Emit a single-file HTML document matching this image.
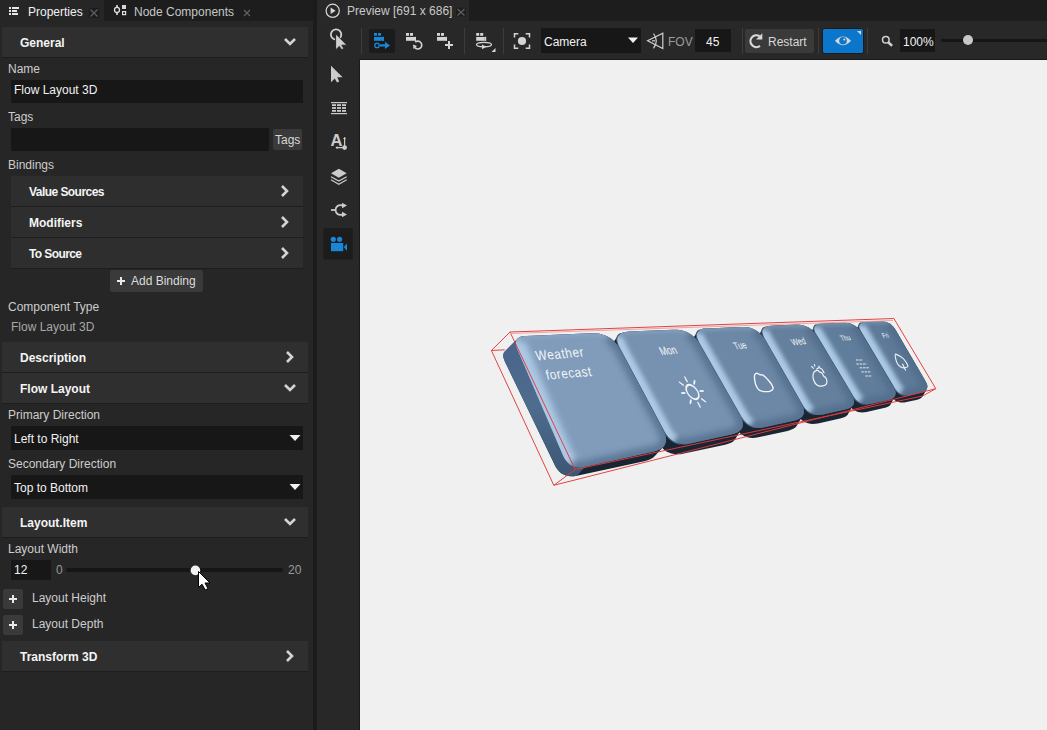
<!DOCTYPE html>
<html><head><meta charset="utf-8">
<style>
*{margin:0;padding:0;box-sizing:border-box}
html,body{width:1047px;height:730px;overflow:hidden;background:#262626}
body{position:relative;font-family:"Liberation Sans",sans-serif;font-size:12px;color:#cfcfcf}
.a{position:absolute}
.t{position:absolute;white-space:nowrap;line-height:14px;height:14px}
.b{font-weight:bold;color:#f4f4f4}
.hdr{position:absolute;left:2px;width:306px;height:31px;background:#2f2f2f;border-bottom:1px solid #1e1e1e}
.row{position:absolute;left:11px;width:292px;height:31px;background:#2e2e2e;border-bottom:1px solid #1e1e1e}
.inp{position:absolute;background:#171717}
.btn{position:absolute;background:#3a3a3a;border-radius:2px}
.lbl{color:#cdcdcd}
.val{color:#f2f2f2}
</style></head><body>
<!-- left panel -->
<div class="a" style="left:0;top:0;width:313px;height:21px;background:#1d1d1d"></div>
<div class="a" style="left:0;top:0;width:104px;height:21px;background:#262626"></div>
<div class="a" style="left:313px;top:0;width:4px;height:730px;background:#1b1b1b"></div>

<div class="t val" style="left:28px;top:5px">Properties</div>
<div class="t" style="left:134px;top:5px;color:#c6c6c6">Node Components</div>

<div class="hdr" style="top:27px"></div>
<div class="t b" style="left:20px;top:36px">General</div>
<div class="t lbl" style="left:8px;top:62px">Name</div>
<div class="inp" style="left:11px;top:80px;width:292px;height:23px"></div>
<div class="t val" style="left:14px;top:83px">Flow Layout 3D</div>
<div class="t lbl" style="left:8px;top:110px">Tags</div>
<div class="inp" style="left:11px;top:128px;width:258px;height:23px"></div>
<div class="btn" style="left:273px;top:129px;width:29px;height:21px"></div>
<div class="t" style="left:275px;top:133px;color:#d8d8d8">Tags</div>
<div class="t lbl" style="left:8px;top:158px">Bindings</div>
<div class="row" style="top:176px"></div>
<div class="row" style="top:207px"></div>
<div class="row" style="top:238px"></div>
<div class="t b" style="left:29px;top:185px;letter-spacing:-0.55px">Value Sources</div>
<div class="t b" style="left:29px;top:216px">Modifiers</div>
<div class="t b" style="left:29px;top:247px;letter-spacing:-0.6px">To Source</div>
<div class="btn" style="left:110px;top:270px;width:93px;height:22px"></div>
<div class="t" style="left:131px;top:274px;color:#dcdcdc">Add Binding</div>
<div class="t lbl" style="left:8px;top:300px">Component Type</div>
<div class="t" style="left:11px;top:320px;color:#a8a8a8">Flow Layout 3D</div>

<div class="hdr" style="top:342px"></div>
<div class="t b" style="left:20px;top:351px">Description</div>
<div class="hdr" style="top:373px"></div>
<div class="t b" style="left:20px;top:382px">Flow Layout</div>
<div class="t lbl" style="left:8px;top:408px">Primary Direction</div>
<div class="inp" style="left:11px;top:426px;width:292px;height:24px"></div>
<div class="t val" style="left:14px;top:432px">Left to Right</div>
<div class="t lbl" style="left:8px;top:457px">Secondary Direction</div>
<div class="inp" style="left:11px;top:475px;width:292px;height:24px"></div>
<div class="t val" style="left:14px;top:481px">Top to Bottom</div>

<div class="hdr" style="top:507px"></div>
<div class="t b" style="left:20px;top:516px">Layout.Item</div>
<div class="t lbl" style="left:8px;top:542px">Layout Width</div>
<div class="inp" style="left:11px;top:560px;width:40px;height:20px"></div>
<div class="t val" style="left:14px;top:563px">12</div>
<div class="t" style="left:56px;top:563px;color:#9a9a9a">0</div>
<div class="a" style="left:66px;top:568px;width:217px;height:4px;border-radius:2px;background:#161616"></div>
<div class="t" style="left:288px;top:563px;color:#9a9a9a">20</div>
<div class="btn" style="left:3px;top:589px;width:20px;height:20px"></div>
<div class="t lbl" style="left:32px;top:591px">Layout Height</div>
<div class="btn" style="left:3px;top:615px;width:20px;height:20px"></div>
<div class="t lbl" style="left:32px;top:617px">Layout Depth</div>
<div class="hdr" style="top:641px"></div>
<div class="t b" style="left:20px;top:650px">Transform 3D</div>

<!-- right side -->
<div class="a" style="left:317px;top:0;width:730px;height:21px;background:#1d1d1d"></div>
<div class="a" style="left:317px;top:0;width:152px;height:21px;background:#282828"></div>
<div class="a" style="left:317px;top:21px;width:730px;height:39px;background:#282828"></div>
<div class="a" style="left:317px;top:60px;width:43px;height:670px;background:#282828"></div>
<div class="a" style="left:359px;top:59px;width:688px;height:671px;background:#1a1a1a"></div>
<div class="a" style="left:360px;top:60px;width:687px;height:670px;background:#f0f0f0"></div>
<!--OBJ--><svg class="a" style="left:0;top:0" width="1047" height="730" viewBox="0 0 1047 730">
<defs>
<filter id="bl" x="-20%" y="-20%" width="140%" height="140%"><feGaussianBlur stdDeviation="2.2"/></filter>
<filter id="bl2" x="-20%" y="-20%" width="140%" height="140%"><feGaussianBlur stdDeviation="1.2"/></filter>
<filter id="bl3" x="-30%" y="-30%" width="160%" height="160%"><feGaussianBlur stdDeviation="3"/></filter>
<linearGradient id="side" x1="0" y1="0" x2="0" y2="1"><stop offset="0" stop-color="#48658a"/><stop offset="0.5" stop-color="#4e6c8d"/><stop offset="1" stop-color="#3d5674"/></linearGradient>
<clipPath id="c0"><path d="M517.5 349.4 L516.6 346.9 L516.1 344.7 L516.0 342.7 L516.2 341.0 L516.9 339.6 L517.9 338.3 L519.4 337.4 L521.2 336.6 L523.4 336.2 L526.0 335.9 L591.0 333.2 L594.9 333.2 L598.6 333.6 L602.0 334.4 L605.3 335.5 L608.3 337.0 L611.2 338.8 L613.8 341.1 L616.2 343.7 L618.4 346.7 L620.4 350.0 L663.0 429.8 L664.6 433.2 L665.6 436.3 L666.1 439.2 L665.9 441.8 L665.2 444.1 L663.9 446.2 L662.0 448.0 L659.6 449.5 L656.5 450.8 L652.9 451.7 L585.1 466.7 L582.0 467.2 L579.2 467.3 L576.5 467.1 L574.1 466.5 L571.8 465.6 L569.7 464.3 L567.8 462.6 L566.0 460.6 L564.5 458.2 L563.1 455.4Z"/></clipPath>
<clipPath id="c1"><path d="M619.5 348.2 L618.0 345.2 L617.1 342.5 L616.8 340.1 L616.9 338.0 L617.6 336.1 L618.8 334.6 L620.6 333.4 L622.8 332.5 L625.6 331.9 L629.0 331.6 L673.0 329.8 L676.5 329.8 L679.8 330.1 L683.0 330.8 L685.9 331.8 L688.7 333.1 L691.3 334.8 L693.7 336.8 L696.0 339.1 L698.0 341.7 L699.9 344.7 L739.9 415.0 L741.4 418.0 L742.4 420.8 L742.9 423.3 L742.8 425.6 L742.2 427.7 L741.1 429.5 L739.4 431.1 L737.2 432.5 L734.5 433.6 L731.2 434.5 L690.0 443.6 L686.6 444.2 L683.4 444.3 L680.3 444.1 L677.4 443.5 L674.7 442.5 L672.2 441.1 L669.9 439.3 L667.7 437.1 L665.8 434.6 L664.0 431.6Z"/></clipPath>
<clipPath id="c2"><path d="M698.9 342.9 L697.6 340.3 L696.7 337.9 L696.3 335.8 L696.4 333.9 L697.0 332.3 L698.0 331.0 L699.5 329.9 L701.5 329.1 L704.0 328.6 L707.0 328.4 L741.2 326.9 L744.3 326.9 L747.3 327.2 L750.1 327.8 L752.7 328.7 L755.2 329.9 L757.5 331.4 L759.6 333.1 L761.6 335.2 L763.5 337.5 L765.1 340.1 L801.3 403.5 L802.6 406.1 L803.5 408.6 L803.9 410.9 L803.9 412.9 L803.3 414.7 L802.3 416.4 L800.8 417.8 L798.9 419.0 L796.5 420.0 L793.6 420.8 L764.4 427.2 L761.4 427.7 L758.5 427.9 L755.8 427.7 L753.2 427.2 L750.7 426.3 L748.5 425.1 L746.3 423.5 L744.4 421.6 L742.6 419.4 L740.9 416.7Z"/></clipPath>
<clipPath id="c3"><path d="M764.1 338.4 L763.0 336.1 L762.2 334.0 L761.9 332.2 L761.9 330.5 L762.4 329.1 L763.3 328.0 L764.7 327.1 L766.4 326.4 L768.6 325.9 L771.2 325.7 L795.7 324.6 L798.4 324.7 L801.0 324.9 L803.4 325.4 L805.8 326.2 L807.9 327.2 L810.0 328.5 L811.9 330.0 L813.7 331.8 L815.3 333.8 L816.8 336.1 L851.7 394.4 L852.9 396.7 L853.7 398.9 L854.1 400.8 L854.1 402.6 L853.6 404.2 L852.8 405.6 L851.5 406.8 L849.8 407.9 L847.7 408.8 L845.2 409.5 L822.9 414.4 L820.2 414.8 L817.7 414.9 L815.3 414.8 L813.0 414.3 L810.9 413.6 L808.9 412.5 L807.0 411.1 L805.3 409.5 L803.7 407.5 L802.3 405.2Z"/></clipPath>
<clipPath id="c4"><path d="M815.8 334.4 L814.7 332.4 L814.1 330.6 L813.7 329.1 L813.8 327.7 L814.2 326.5 L814.9 325.5 L816.1 324.7 L817.6 324.2 L819.4 323.8 L821.6 323.6 L843.0 322.7 L845.3 322.7 L847.6 322.9 L849.7 323.3 L851.7 324.0 L853.5 324.9 L855.3 326.0 L856.9 327.3 L858.4 328.8 L859.8 330.5 L861.1 332.5 L893.6 387.1 L894.6 389.1 L895.3 391.0 L895.7 392.6 L895.6 394.1 L895.2 395.5 L894.5 396.7 L893.4 397.8 L892.0 398.7 L890.2 399.4 L888.0 400.0 L870.5 403.9 L868.3 404.3 L866.1 404.4 L864.0 404.3 L862.1 403.9 L860.2 403.2 L858.5 402.3 L856.9 401.2 L855.4 399.8 L854.0 398.1 L852.7 396.1Z"/></clipPath>
<clipPath id="c5"><path d="M860.6 331.6 L859.7 329.8 L859.0 328.2 L858.7 326.8 L858.8 325.5 L859.1 324.4 L859.8 323.5 L860.9 322.8 L862.2 322.2 L863.9 321.9 L866.0 321.7 L879.2 321.1 L881.4 321.2 L883.4 321.4 L885.3 321.8 L887.1 322.4 L888.8 323.2 L890.4 324.2 L891.9 325.4 L893.3 326.8 L894.6 328.4 L895.7 330.2 L925.4 381.1 L926.4 382.9 L927.0 384.6 L927.3 386.1 L927.2 387.5 L926.9 388.8 L926.2 389.9 L925.2 390.9 L923.9 391.7 L922.2 392.4 L920.2 392.9 L910.5 395.1 L908.4 395.4 L906.4 395.6 L904.5 395.4 L902.7 395.1 L901.0 394.5 L899.4 393.7 L897.9 392.6 L896.5 391.3 L895.3 389.8 L894.1 388.0Z"/></clipPath>
</defs>
<path d="M853.8 334.7 L853.8 333.4 L854.2 332.4 L859.1 324.4 L859.9 323.5 L860.9 322.8 L862.2 322.2 L864.0 321.9 L866.0 321.7 L879.2 321.1 L881.4 321.2 L883.4 321.4 L885.3 321.8 L887.1 322.4 L888.9 323.2 L890.5 324.2 L891.9 325.4 L893.3 326.8 L894.6 328.4 L895.8 330.2 L925.4 381.1 L926.4 382.9 L927.0 384.6 L927.3 386.1 L927.2 387.5 L926.9 388.8 L922.8 395.9 L922.1 397.0 L921.1 397.9 L919.8 398.8 L918.1 399.4 L916.2 400.0 L906.5 402.1 L904.4 402.4 L902.4 402.6 L900.5 402.4 L898.7 402.1 L897.0 401.5 L895.4 400.7 L893.9 399.6 L892.5 398.4 L891.2 396.8 L890.0 395.1 L855.8 339.5 L854.8 337.7 L854.1 336.1Z" fill="#1a2534"/>
<path d="M860.6 331.6 L859.7 329.8 L859.0 328.2 L858.7 326.8 L858.8 325.5 L859.1 324.4 L859.8 323.5 L860.9 322.8 L862.2 322.2 L863.9 321.9 L866.0 321.7 L879.2 321.1 L881.4 321.2 L883.4 321.4 L885.3 321.8 L887.1 322.4 L888.8 323.2 L890.4 324.2 L891.9 325.4 L893.3 326.8 L894.6 328.4 L895.7 330.2 L925.4 381.1 L926.4 382.9 L927.0 384.6 L927.3 386.1 L927.2 387.5 L926.9 388.8 L926.2 389.9 L925.2 390.9 L923.9 391.7 L922.2 392.4 L920.2 392.9 L910.5 395.1 L908.4 395.4 L906.4 395.6 L904.5 395.4 L902.7 395.1 L901.0 394.5 L899.4 393.7 L897.9 392.6 L896.5 391.3 L895.3 389.8 L894.1 388.0Z" fill="#5e7a98"/>
<g clip-path="url(#c5)">
<path d="M901.0 394.5 L899.4 393.7 L897.9 392.6 L896.5 391.3 L895.3 389.8 L894.1 388.0 L860.6 331.6 L859.7 329.8 L859.0 328.2 L858.7 326.8 L858.8 325.5 L859.1 324.4" fill="none" stroke="#abc8e4" stroke-width="15" filter="url(#bl)" opacity="1"/>
<path d="M859.1 324.4 L859.8 323.5 L860.9 322.8 L862.2 322.2 L863.9 321.9 L866.0 321.7 L879.2 321.1 L881.4 321.2 L883.4 321.4 L885.3 321.8 L887.1 322.4 L888.8 323.2" fill="none" stroke="#9ab6d2" stroke-width="4" filter="url(#bl)" opacity="0.45"/>
<path d="M888.8 323.2 L890.4 324.2 L891.9 325.4 L893.3 326.8 L894.6 328.4 L895.7 330.2 L925.4 381.1 L926.4 382.9 L927.0 384.6 L927.3 386.1 L927.2 387.5 L926.9 388.8 L926.2 389.9 L925.2 390.9 L923.9 391.7 L922.2 392.4 L920.2 392.9 L910.5 395.1 L908.4 395.4 L906.4 395.6 L904.5 395.4 L902.7 395.1 L901.0 394.5" fill="none" stroke="#4d6987" stroke-width="12" filter="url(#bl3)" opacity="0.7"/>
</g>
<path d="M904.5 395.4 L902.7 395.1 L901.0 394.5 L899.4 393.7 L897.9 392.6 L896.5 391.3 L895.3 389.8 L894.1 388.0 L860.6 331.6 L859.7 329.8 L859.0 328.2 L858.7 326.8 L858.8 325.5 L859.1 324.4 L859.8 323.5 L860.9 322.8" fill="none" stroke="#425b77" stroke-width="1.1"/>
<path d="M808.8 338.0 L808.8 336.6 L809.2 335.5 L814.2 326.5 L814.9 325.5 L816.1 324.7 L817.6 324.1 L819.4 323.8 L821.6 323.6 L843.0 322.7 L845.3 322.7 L847.6 322.9 L849.7 323.3 L851.6 324.0 L853.5 324.9 L855.3 325.9 L856.9 327.3 L858.4 328.8 L859.8 330.5 L861.1 332.5 L893.6 387.1 L894.6 389.1 L895.3 390.9 L895.6 392.6 L895.6 394.1 L895.2 395.5 L891.1 403.6 L890.4 404.8 L889.3 405.9 L887.9 406.8 L886.1 407.5 L883.9 408.1 L866.5 411.9 L864.3 412.3 L862.1 412.4 L860.0 412.3 L858.1 411.9 L856.2 411.2 L854.5 410.4 L852.8 409.2 L851.3 407.8 L849.9 406.2 L848.6 404.2 L810.9 343.2 L809.9 341.3 L809.1 339.5Z" fill="#1a2534"/>
<path d="M815.8 334.4 L814.7 332.4 L814.1 330.6 L813.7 329.1 L813.8 327.7 L814.2 326.5 L814.9 325.5 L816.1 324.7 L817.6 324.2 L819.4 323.8 L821.6 323.6 L843.0 322.7 L845.3 322.7 L847.6 322.9 L849.7 323.3 L851.7 324.0 L853.5 324.9 L855.3 326.0 L856.9 327.3 L858.4 328.8 L859.8 330.5 L861.1 332.5 L893.6 387.1 L894.6 389.1 L895.3 391.0 L895.7 392.6 L895.6 394.1 L895.2 395.5 L894.5 396.7 L893.4 397.8 L892.0 398.7 L890.2 399.4 L888.0 400.0 L870.5 403.9 L868.3 404.3 L866.1 404.4 L864.0 404.3 L862.1 403.9 L860.2 403.2 L858.5 402.3 L856.9 401.2 L855.4 399.8 L854.0 398.1 L852.7 396.1Z" fill="#607d9b"/>
<g clip-path="url(#c4)">
<path d="M860.2 403.2 L858.5 402.3 L856.9 401.2 L855.4 399.8 L854.0 398.1 L852.7 396.1 L815.8 334.4 L814.7 332.4 L814.1 330.6 L813.7 329.1 L813.8 327.7 L814.2 326.5" fill="none" stroke="#abc8e4" stroke-width="15" filter="url(#bl)" opacity="1"/>
<path d="M814.2 326.5 L814.9 325.5 L816.1 324.7 L817.6 324.2 L819.4 323.8 L821.6 323.6 L843.0 322.7 L845.3 322.7 L847.6 322.9 L849.7 323.3 L851.7 324.0 L853.5 324.9" fill="none" stroke="#9ab6d2" stroke-width="4" filter="url(#bl)" opacity="0.45"/>
<path d="M853.5 324.9 L855.3 326.0 L856.9 327.3 L858.4 328.8 L859.8 330.5 L861.1 332.5 L893.6 387.1 L894.6 389.1 L895.3 391.0 L895.7 392.6 L895.6 394.1 L895.2 395.5 L894.5 396.7 L893.4 397.8 L892.0 398.7 L890.2 399.4 L888.0 400.0 L870.5 403.9 L868.3 404.3 L866.1 404.4 L864.0 404.3 L862.1 403.9 L860.2 403.2" fill="none" stroke="#4d6987" stroke-width="12" filter="url(#bl3)" opacity="0.7"/>
</g>
<path d="M864.0 404.3 L862.1 403.9 L860.2 403.2 L858.5 402.3 L856.9 401.2 L855.4 399.8 L854.0 398.1 L852.7 396.1 L815.8 334.4 L814.7 332.4 L814.1 330.6 L813.7 329.1 L813.8 327.7 L814.2 326.5 L814.9 325.5 L816.1 324.7" fill="none" stroke="#425b77" stroke-width="1.1"/>
<path d="M755.9 342.1 L756.0 340.5 L756.5 339.1 L762.4 329.1 L763.3 328.0 L764.7 327.1 L766.4 326.4 L768.6 325.9 L771.2 325.7 L795.6 324.6 L798.4 324.6 L801.0 324.9 L803.4 325.4 L805.8 326.2 L807.9 327.2 L810.0 328.5 L811.9 330.0 L813.7 331.8 L815.3 333.8 L816.8 336.1 L851.6 394.4 L852.9 396.7 L853.7 398.9 L854.1 400.8 L854.1 402.6 L853.6 404.2 L848.5 413.3 L847.7 414.7 L846.4 415.9 L844.7 417.0 L842.6 417.8 L840.1 418.5 L817.9 423.4 L815.2 423.8 L812.7 423.9 L810.3 423.8 L808.0 423.3 L805.9 422.6 L803.9 421.5 L802.0 420.2 L800.2 418.5 L798.6 416.6 L797.2 414.3 L758.3 348.3 L757.1 346.0 L756.3 343.9Z" fill="#1a2534"/>
<path d="M764.1 338.4 L763.0 336.1 L762.2 334.0 L761.9 332.2 L761.9 330.5 L762.4 329.1 L763.3 328.0 L764.7 327.1 L766.4 326.4 L768.6 325.9 L771.2 325.7 L795.7 324.6 L798.4 324.7 L801.0 324.9 L803.4 325.4 L805.8 326.2 L807.9 327.2 L810.0 328.5 L811.9 330.0 L813.7 331.8 L815.3 333.8 L816.8 336.1 L851.7 394.4 L852.9 396.7 L853.7 398.9 L854.1 400.8 L854.1 402.6 L853.6 404.2 L852.8 405.6 L851.5 406.8 L849.8 407.9 L847.7 408.8 L845.2 409.5 L822.9 414.4 L820.2 414.8 L817.7 414.9 L815.3 414.8 L813.0 414.3 L810.9 413.6 L808.9 412.5 L807.0 411.1 L805.3 409.5 L803.7 407.5 L802.3 405.2Z" fill="#64809d"/>
<g clip-path="url(#c3)">
<path d="M810.9 413.6 L808.9 412.5 L807.0 411.1 L805.3 409.5 L803.7 407.5 L802.3 405.2 L764.1 338.4 L763.0 336.1 L762.2 334.0 L761.9 332.2 L761.9 330.5 L762.4 329.1" fill="none" stroke="#abc8e4" stroke-width="15" filter="url(#bl)" opacity="1"/>
<path d="M762.4 329.1 L763.3 328.0 L764.7 327.1 L766.4 326.4 L768.6 325.9 L771.2 325.7 L795.7 324.6 L798.4 324.7 L801.0 324.9 L803.4 325.4 L805.8 326.2 L807.9 327.2" fill="none" stroke="#9ab6d2" stroke-width="4" filter="url(#bl)" opacity="0.45"/>
<path d="M807.9 327.2 L810.0 328.5 L811.9 330.0 L813.7 331.8 L815.3 333.8 L816.8 336.1 L851.7 394.4 L852.9 396.7 L853.7 398.9 L854.1 400.8 L854.1 402.6 L853.6 404.2 L852.8 405.6 L851.5 406.8 L849.8 407.9 L847.7 408.8 L845.2 409.5 L822.9 414.4 L820.2 414.8 L817.7 414.9 L815.3 414.8 L813.0 414.3 L810.9 413.6" fill="none" stroke="#4d6987" stroke-width="12" filter="url(#bl3)" opacity="0.7"/>
</g>
<path d="M815.3 414.8 L813.0 414.3 L810.9 413.6 L808.9 412.5 L807.0 411.1 L805.3 409.5 L803.7 407.5 L802.3 405.2 L764.1 338.4 L763.0 336.1 L762.2 334.0 L761.9 332.2 L761.9 330.5 L762.4 329.1 L763.3 328.0 L764.7 327.1" fill="none" stroke="#425b77" stroke-width="1.1"/>
<path d="M689.4 346.7 L689.5 344.9 L690.0 343.3 L697.0 332.3 L698.0 331.0 L699.5 329.9 L701.5 329.1 L704.0 328.6 L707.0 328.4 L741.2 326.9 L744.3 326.9 L747.3 327.2 L750.1 327.8 L752.7 328.7 L755.2 329.9 L757.5 331.4 L759.6 333.1 L761.6 335.2 L763.5 337.5 L765.1 340.1 L801.3 403.5 L802.6 406.1 L803.5 408.6 L803.9 410.9 L803.9 412.9 L803.3 414.8 L797.2 424.9 L796.2 426.5 L794.7 427.9 L792.8 429.1 L790.4 430.1 L787.5 430.9 L758.4 437.2 L755.4 437.7 L752.5 437.9 L749.8 437.7 L747.2 437.2 L744.7 436.3 L742.4 435.1 L740.3 433.6 L738.3 431.7 L736.5 429.4 L734.8 426.9 L692.1 353.8 L690.7 351.1 L689.8 348.8Z" fill="#1a2534"/>
<path d="M698.9 342.9 L697.6 340.3 L696.7 337.9 L696.3 335.8 L696.4 333.9 L697.0 332.3 L698.0 331.0 L699.5 329.9 L701.5 329.1 L704.0 328.6 L707.0 328.4 L741.2 326.9 L744.3 326.9 L747.3 327.2 L750.1 327.8 L752.7 328.7 L755.2 329.9 L757.5 331.4 L759.6 333.1 L761.6 335.2 L763.5 337.5 L765.1 340.1 L801.3 403.5 L802.6 406.1 L803.5 408.6 L803.9 410.9 L803.9 412.9 L803.3 414.7 L802.3 416.4 L800.8 417.8 L798.9 419.0 L796.5 420.0 L793.6 420.8 L764.4 427.2 L761.4 427.7 L758.5 427.9 L755.8 427.7 L753.2 427.2 L750.7 426.3 L748.5 425.1 L746.3 423.5 L744.4 421.6 L742.6 419.4 L740.9 416.7Z" fill="#6c88a6"/>
<g clip-path="url(#c2)">
<path d="M750.7 426.3 L748.5 425.1 L746.3 423.5 L744.4 421.6 L742.6 419.4 L740.9 416.7 L698.9 342.9 L697.6 340.3 L696.7 337.9 L696.3 335.8 L696.4 333.9 L697.0 332.3" fill="none" stroke="#abc8e4" stroke-width="15" filter="url(#bl)" opacity="1"/>
<path d="M697.0 332.3 L698.0 331.0 L699.5 329.9 L701.5 329.1 L704.0 328.6 L707.0 328.4 L741.2 326.9 L744.3 326.9 L747.3 327.2 L750.1 327.8 L752.7 328.7 L755.2 329.9" fill="none" stroke="#9ab6d2" stroke-width="4" filter="url(#bl)" opacity="0.45"/>
<path d="M755.2 329.9 L757.5 331.4 L759.6 333.1 L761.6 335.2 L763.5 337.5 L765.1 340.1 L801.3 403.5 L802.6 406.1 L803.5 408.6 L803.9 410.9 L803.9 412.9 L803.3 414.7 L802.3 416.4 L800.8 417.8 L798.9 419.0 L796.5 420.0 L793.6 420.8 L764.4 427.2 L761.4 427.7 L758.5 427.9 L755.8 427.7 L753.2 427.2 L750.7 426.3" fill="none" stroke="#4d6987" stroke-width="12" filter="url(#bl3)" opacity="0.7"/>
</g>
<path d="M755.8 427.7 L753.2 427.2 L750.7 426.3 L748.5 425.1 L746.3 423.5 L744.4 421.6 L742.6 419.4 L740.9 416.7 L698.9 342.9 L697.6 340.3 L696.7 337.9 L696.3 335.8 L696.4 333.9 L697.0 332.3 L698.0 331.0 L699.5 329.9" fill="none" stroke="#425b77" stroke-width="1.1"/>
<path d="M608.9 351.9 L609.1 349.8 L609.7 348.0 L617.6 336.1 L618.8 334.6 L620.6 333.4 L622.8 332.5 L625.6 331.9 L629.0 331.6 L673.0 329.8 L676.5 329.8 L679.9 330.1 L683.0 330.8 L686.0 331.8 L688.7 333.1 L691.3 334.8 L693.7 336.8 L696.0 339.1 L698.0 341.7 L699.9 344.7 L739.9 415.0 L741.4 418.0 L742.4 420.8 L742.9 423.3 L742.8 425.6 L742.2 427.7 L734.8 439.8 L733.2 441.4 L731.0 442.7 L728.3 443.8 L725.1 444.7 L684.0 453.6 L680.6 454.2 L677.4 454.3 L674.3 454.1 L671.4 453.5 L668.7 452.6 L666.1 451.2 L663.8 449.4 L661.6 447.3 L659.6 444.7 L657.8 441.8 L611.8 359.9 L610.3 356.9 L609.4 354.3Z" fill="#1a2534"/>
<path d="M619.5 348.2 L618.0 345.2 L617.1 342.5 L616.8 340.1 L616.9 338.0 L617.6 336.1 L618.8 334.6 L620.6 333.4 L622.8 332.5 L625.6 331.9 L629.0 331.6 L673.0 329.8 L676.5 329.8 L679.8 330.1 L683.0 330.8 L685.9 331.8 L688.7 333.1 L691.3 334.8 L693.7 336.8 L696.0 339.1 L698.0 341.7 L699.9 344.7 L739.9 415.0 L741.4 418.0 L742.4 420.8 L742.9 423.3 L742.8 425.6 L742.2 427.7 L741.1 429.5 L739.4 431.1 L737.2 432.5 L734.5 433.6 L731.2 434.5 L690.0 443.6 L686.6 444.2 L683.4 444.3 L680.3 444.1 L677.4 443.5 L674.7 442.5 L672.2 441.1 L669.9 439.3 L667.7 437.1 L665.8 434.6 L664.0 431.6Z" fill="#7792b0"/>
<g clip-path="url(#c1)">
<path d="M674.7 442.5 L672.2 441.1 L669.9 439.3 L667.7 437.1 L665.8 434.6 L664.0 431.6 L619.5 348.2 L618.0 345.2 L617.1 342.5 L616.8 340.1 L616.9 338.0 L617.6 336.1" fill="none" stroke="#abc8e4" stroke-width="15" filter="url(#bl)" opacity="1"/>
<path d="M617.6 336.1 L618.8 334.6 L620.6 333.4 L622.8 332.5 L625.6 331.9 L629.0 331.6 L673.0 329.8 L676.5 329.8 L679.8 330.1 L683.0 330.8 L685.9 331.8 L688.7 333.1" fill="none" stroke="#9ab6d2" stroke-width="4" filter="url(#bl)" opacity="0.45"/>
<path d="M688.7 333.1 L691.3 334.8 L693.7 336.8 L696.0 339.1 L698.0 341.7 L699.9 344.7 L739.9 415.0 L741.4 418.0 L742.4 420.8 L742.9 423.3 L742.8 425.6 L742.2 427.7 L741.1 429.5 L739.4 431.1 L737.2 432.5 L734.5 433.6 L731.2 434.5 L690.0 443.6 L686.6 444.2 L683.4 444.3 L680.3 444.1 L677.4 443.5 L674.7 442.5" fill="none" stroke="#4d6987" stroke-width="12" filter="url(#bl3)" opacity="0.7"/>
</g>
<path d="M680.3 444.1 L677.4 443.5 L674.7 442.5 L672.2 441.1 L669.9 439.3 L667.7 437.1 L665.8 434.6 L664.0 431.6 L619.5 348.2 L618.0 345.2 L617.1 342.5 L616.8 340.1 L616.9 338.0 L617.6 336.1 L618.8 334.6 L620.6 333.4" fill="none" stroke="#425b77" stroke-width="1.1"/>
<path d="M503.3 355.5 L503.5 353.8 L504.1 352.4 L505.1 351.2 L517.9 338.4 L519.4 337.4 L521.2 336.6 L523.4 336.1 L526.0 335.9 L591.0 333.2 L594.9 333.2 L598.6 333.6 L602.0 334.4 L605.3 335.5 L608.4 337.0 L611.2 338.8 L613.8 341.1 L616.2 343.7 L618.4 346.7 L620.4 350.0 L663.0 429.8 L664.6 433.2 L665.6 436.3 L666.1 439.2 L665.9 441.8 L665.2 444.1 L663.9 446.2 L655.1 455.8 L653.3 457.6 L650.9 459.0 L647.9 460.2 L644.3 461.2 L577.0 475.7 L574.0 476.2 L571.2 476.3 L568.5 476.1 L566.0 475.5 L563.7 474.6 L561.6 473.4 L559.6 471.7 L557.8 469.8 L556.1 467.4 L554.7 464.8 L505.1 361.9 L504.1 359.5 L503.5 357.4Z" fill="#1a2534"/>
<path d="M503.3 355.5 L503.5 353.8 L504.1 352.4 L505.1 351.2 L517.9 338.4 L519.4 337.4 L521.2 336.6 L523.4 336.1 L526.0 335.9 L585.1 466.7 L577.0 475.7 L574.0 476.2 L571.2 476.3 L568.5 476.1 L566.0 475.5 L563.7 474.6 L561.6 473.4 L559.6 471.7 L557.8 469.8 L556.1 467.4 L554.7 464.8 L505.1 361.9 L504.1 359.5 L503.5 357.4Z" fill="url(#side)"/>
<path d="M517.5 349.4 L516.6 346.9 L516.1 344.7 L516.0 342.7 L516.2 341.0 L516.9 339.6 L517.9 338.3 L519.4 337.4 L521.2 336.6 L523.4 336.2 L526.0 335.9 L591.0 333.2 L594.9 333.2 L598.6 333.6 L602.0 334.4 L605.3 335.5 L608.3 337.0 L611.2 338.8 L613.8 341.1 L616.2 343.7 L618.4 346.7 L620.4 350.0 L663.0 429.8 L664.6 433.2 L665.6 436.3 L666.1 439.2 L665.9 441.8 L665.2 444.1 L663.9 446.2 L662.0 448.0 L659.6 449.5 L656.5 450.8 L652.9 451.7 L585.1 466.7 L582.0 467.2 L579.2 467.3 L576.5 467.1 L574.1 466.5 L571.8 465.6 L569.7 464.3 L567.8 462.6 L566.0 460.6 L564.5 458.2 L563.1 455.4Z" fill="#809cba"/>
<g clip-path="url(#c0)">
<path d="M571.8 465.6 L569.7 464.3 L567.8 462.6 L566.0 460.6 L564.5 458.2 L563.1 455.4 L517.5 349.4 L516.6 346.9 L516.1 344.7 L516.0 342.7 L516.2 341.0 L516.9 339.6" fill="none" stroke="#abc8e4" stroke-width="20" filter="url(#bl3)" opacity="1"/>
<path d="M516.9 339.6 L517.9 338.3 L519.4 337.4 L521.2 336.6 L523.4 336.2 L526.0 335.9 L591.0 333.2 L594.9 333.2 L598.6 333.6 L602.0 334.4 L605.3 335.5 L608.3 337.0" fill="none" stroke="#9ab6d2" stroke-width="4" filter="url(#bl)" opacity="0.45"/>
<path d="M608.3 337.0 L611.2 338.8 L613.8 341.1 L616.2 343.7 L618.4 346.7 L620.4 350.0 L663.0 429.8 L664.6 433.2 L665.6 436.3 L666.1 439.2 L665.9 441.8 L665.2 444.1 L663.9 446.2 L662.0 448.0 L659.6 449.5 L656.5 450.8 L652.9 451.7 L585.1 466.7 L582.0 467.2 L579.2 467.3 L576.5 467.1 L574.1 466.5 L571.8 465.6" fill="none" stroke="#4d6987" stroke-width="12" filter="url(#bl3)" opacity="0.7"/>
</g>
<g stroke="#e23a3a" stroke-width="1" fill="none" opacity="0.95">
<path d="M510 332L893.9 318.5"/>
<path d="M510 332L491.4 350.5"/>
<path d="M491.4 350.5L553.8 485.3"/>
<path d="M510 332L575.1 469.5"/>
<path d="M553.8 485.3L575.1 469.5"/>
<path d="M575.1 469.5L922.5 396"/>
<path d="M553.8 485.3L935.8 388.7"/>
<path d="M893.9 318.5L935.8 388.7"/>
<path d="M935.8 388.7L922.5 396"/>
<path d="M491.4 350.5L504.7 349.8"/>
<path d="M510 333.5L893 320.5" stroke="#f0a0a0" stroke-width="1"/>
</g>
<g fill="#f2f5f8" font-family="Liberation Sans">
<text transform="matrix(0.86,-0.075,0.24,1,536.8,360.5)" font-size="13.6" letter-spacing="0.7">Weather</text>
<text transform="matrix(0.86,-0.075,0.24,1,547,379.8)" font-size="13.6" letter-spacing="0.6">forecast</text>
<text transform="matrix(0.83,-0.09,0.55,1.12,661.8,355.2)" font-size="10.2">Mon</text>
<text transform="matrix(0.83,-0.09,0.55,1.12,735.5,349.4)" font-size="8.9">Tue</text>
<text transform="matrix(0.83,-0.09,0.55,1.12,793,345.4)" font-size="8.2">Wed</text>
<text transform="matrix(0.83,-0.09,0.55,1.12,841.8,341)" font-size="6.8">Thu</text>
<text transform="matrix(0.83,-0.09,0.55,1.12,883.5,338.2)" font-size="6.4">Fri</text>
</g>
<g transform="matrix(0.83,-0.09,0.59,1.15,692.5,392)" stroke="#f2f5f8" fill="none" stroke-width="1.6" stroke-linecap="round">
<circle r="6.3"/>
<path d="M9.30 0.00L12.80 0.00"/>
<path d="M6.58 6.58L9.05 9.05"/>
<path d="M0.00 9.30L0.00 12.80"/>
<path d="M-6.58 6.58L-9.05 9.05"/>
<path d="M-9.30 0.00L-12.80 0.00"/>
<path d="M-6.58 -6.58L-9.05 -9.05"/>
<path d="M-0.00 -9.30L-0.00 -12.80"/>
<path d="M6.58 -6.58L9.05 -9.05"/>
</g>
<path d="M754.8 374.6 C755.2 373.9 756.3 373.3 757.1 373.3 C757.9 373.3 758.8 374.3 759.6 374.6 C760.4 374.9 761.2 374.6 762.0 374.9 C762.8 375.2 763.4 375.4 764.4 376.2 C765.4 377.0 766.5 378.2 767.7 379.5 C768.9 380.8 770.5 382.7 771.4 384.2 C772.3 385.7 773.3 387.2 773.1 388.4 C772.9 389.5 771.9 390.6 770.4 391.1 C768.9 391.6 766.0 391.7 764.2 391.6 C762.4 391.5 760.9 391.1 759.7 390.4 C758.5 389.7 757.8 388.7 757.1 387.5 C756.4 386.3 755.7 384.7 755.3 383.1 C754.9 381.5 754.6 379.1 754.5 377.7 C754.4 376.3 754.4 375.3 754.8 374.6Z" fill="none" stroke="#f2f5f8" stroke-width="1.4"/>
<path d="M813.4 373.6 C813.7 372.8 813.9 372.1 814.6 371.5 C815.3 370.9 816.7 370.2 817.5 370.3 C818.3 370.4 818.8 371.4 819.5 371.9 C820.2 372.4 821.3 372.5 822.0 373.2 C822.7 373.9 823.1 375.4 823.7 376.1 C824.3 376.9 825.2 376.9 825.7 377.7 C826.2 378.5 826.8 379.9 826.9 381.0 C827.0 382.1 826.8 383.5 826.1 384.3 C825.4 385.1 824.0 385.6 822.8 385.9 C821.6 386.2 819.9 386.3 818.7 385.9 C817.5 385.5 816.3 384.6 815.4 383.5 C814.5 382.4 813.8 380.5 813.4 379.3 C813.0 378.1 813.0 377.1 813.0 376.1 C813.0 375.2 813.1 374.4 813.4 373.6Z" fill="none" stroke="#f2f5f8" stroke-width="1.2"/>
<path d="M816.3 369.5Q817.5 367.5 820 368Q822.5 368.8 823.7 372M811.3 366.2L813.8 368.7M814.2 364.1L815 366.6M818.7 365.8L819.5 367.8M822.8 371.5L824.5 372.8" stroke="#f2f5f8" stroke-width="1.1" fill="none"/>
<path d="M856 360L863 360M856.4 364L866.7 364M859.7 367.8L869.5 367.8M861.3 371.9L870.8 371.9M865.4 376L871.6 376" stroke="#f2f5f8" stroke-width="0.9" fill="none" stroke-dasharray="2.5 0.8"/>
<path d="M895.4 354.2 C896.1 353.7 898.5 355.4 900.0 356.3 C901.5 357.2 902.9 358.1 904.1 359.5 C905.3 360.9 906.8 363.3 907.4 364.5 C908.0 365.7 908.2 365.9 907.8 366.5 C907.4 367.1 906.1 367.7 904.9 367.8 C903.7 367.9 902.0 367.6 900.8 366.9 C899.6 366.2 898.3 364.9 897.5 363.7 C896.7 362.5 896.2 361.1 895.9 359.5 C895.5 357.9 894.7 354.7 895.4 354.2Z" fill="none" stroke="#f2f5f8" stroke-width="1.1"/>
<path d="M902.4 363.7L905.7 370.6" stroke="#f2f5f8" stroke-width="1.1"/>
</svg><!--/OBJ-->
<div class="t" style="left:347px;top:4px;color:#c8c8c8">Preview [691 x 686]</div>

<div class="inp" style="left:541px;top:28px;width:100px;height:25px"></div>
<div class="t val" style="left:544px;top:35px">Camera</div>
<div class="t" style="left:668px;top:35px;color:#9c9c9c">FOV</div>
<div class="inp" style="left:695px;top:29px;width:36px;height:23px"></div>
<div class="t val" style="left:706px;top:35px">45</div>
<div class="btn" style="left:745px;top:29px;width:69px;height:24px"></div>
<div class="t" style="left:768px;top:35px;color:#d8d8d8">Restart</div>
<div class="a" style="left:823px;top:29px;width:40px;height:24px;background:#0a78d4"></div>
<div class="inp" style="left:900px;top:29px;width:35px;height:23px"></div>
<div class="t val" style="left:903px;top:35px">100%</div>
<div class="a" style="left:941px;top:39px;width:106px;height:3px;background:#161616"></div>
<div class="a" style="left:963px;top:35px;width:10px;height:10px;border-radius:5px;background:#c8c8c8"></div>

<svg class="a" style="left:0;top:0" width="1047" height="730" viewBox="0 0 1047 730">
<!-- properties list icon -->
<g fill="#e6e6e6">
<rect x="9" y="7" width="2" height="2"/><rect x="12" y="7" width="7" height="2"/>
<rect x="9" y="10" width="2" height="2"/><rect x="12" y="10" width="5" height="2"/>
<rect x="9" y="13" width="2" height="2"/><rect x="12" y="13" width="6" height="2"/>
</g>
<rect x="89" y="8" width="10" height="10" fill="#1c1c1c"/>
<path d="M90.5 9.5L97.5 16.5M97.5 9.5L90.5 16.5" stroke="#5c5c5c" stroke-width="1.4"/>
<!-- node components icon -->
<g fill="none" stroke="#e0e0e0">
<circle cx="117" cy="9.9" r="2.5" stroke-width="1.3"/>
<path d="M117 5v2.4M117 12.4V15" stroke-width="1.6"/>
<rect x="122.6" y="11.6" width="3" height="3" stroke-width="1.2"/>
</g>
<rect x="122" y="5" width="4" height="4" fill="#d6d6d6"/>
<path d="M244 10L250 16M250 10L244 16" stroke="#5e5e5e" stroke-width="1.4"/>

<!-- chevrons right for binding rows -->
<g fill="none" stroke="#d4d4d4" stroke-width="2.6" stroke-linecap="butt" stroke-linejoin="miter">
<path d="M282 186l5 5l-5 5"/>
<path d="M282 217l5 5l-5 5"/>
<path d="M282 248l5 5l-5 5"/>
<path d="M287 352l5 5l-5 5"/>
<path d="M287 651l5 5l-5 5"/>
<path d="M285 39l5 5l5 -5"/>
<path d="M285 385l5 5l5 -5"/>
<path d="M285 519l5 5l5 -5"/>
</g>
<!-- dropdown triangles -->
<g fill="#f0f0f0">
<path d="M289.5 435h11l-5.5 6z"/>
<path d="M289.5 484h11l-5.5 6z"/>
<path d="M628 37.5h10l-5 5.5z"/>
</g>
<!-- plus icons -->
<g stroke="#e8e8e8" stroke-width="2">
<path d="M117 281h8M121 277v8"/>
<path d="M9 599h8M13 595v8"/>
<path d="M9 625h8M13 621v8"/>
</g>
<!-- slider thumb + cursor -->
<circle cx="195.4" cy="570.4" r="4.8" fill="#f2f2f2"/>
<path d="M198.5 571.5V587.5L202 584.2L205.3 590L208 588.6L205 583H210Z" fill="#fff" stroke="#000" stroke-width="1"/>

<!-- preview tab play icon -->
<circle cx="332.7" cy="10.8" r="6.6" fill="none" stroke="#d8d8d8" stroke-width="1.2"/>
<path d="M330.6 7.6v6.4l5-3.2z" fill="#d8d8d8"/>
<rect x="456" y="7.5" width="10" height="9" fill="#1d1d1d"/>
<path d="M457.5 9L464.5 15.5M464.5 9L457.5 15.5" stroke="#5c5c5c" stroke-width="1.4"/>

<!-- toolbar separators -->
<g fill="#3c3c3c">
<rect x="361" y="28" width="1" height="26"/>
<rect x="464" y="28" width="1" height="26"/>
<rect x="503" y="28" width="1" height="26"/>
<rect x="742" y="28" width="1" height="26"/>
<rect x="818" y="28" width="1" height="26"/>
<rect x="867" y="28" width="1" height="26"/>
</g>
<!-- select icon -->
<circle cx="336.1" cy="34.5" r="5.2" fill="none" stroke="#cfcfcf" stroke-width="1.8"/>
<path d="M335.6 33.8V50L339.3 46.4L341.7 49.8L343.9 48.4L341.8 45.2H347Z" fill="#cfcfcf" stroke="#282828" stroke-width="1"/>
<!-- active button -->
<rect x="369" y="29" width="26" height="24" rx="2" fill="#1b1b1b"/>
<g fill="#1a86d8">
<rect x="374" y="33" width="3" height="2.7"/><rect x="378" y="33" width="3" height="2.7"/>
<rect x="374" y="37" width="7" height="3.8"/><path d="M381 37l3 -0.2v4.2l-3 -0.2z"/>
<path d="M380 44.2h5v-2.4l5 3.6l-5 3.6v-2.4h-5z"/>
</g>
<circle cx="377" cy="45.4" r="2.2" fill="none" stroke="#1a86d8" stroke-width="1.3"/>
<!-- icon 3 camera refresh -->
<g fill="#d4d4d4">
<rect x="406" y="33" width="3" height="2.8"/><rect x="410" y="33" width="3" height="2.8"/>
<rect x="406" y="37" width="8" height="3.8"/><path d="M414 37l2 -0.2v4.2l-2 -0.2z"/>
<rect x="437" y="33" width="3" height="2.8"/><rect x="441" y="33" width="3" height="2.8"/>
<rect x="437" y="37" width="8" height="3.8"/><path d="M445 37l2 -0.2v4.2l-2 -0.2z"/>
<rect x="476.2" y="33" width="3" height="2.8"/><rect x="480.2" y="33" width="3" height="2.8"/>
<rect x="476.2" y="37" width="8" height="3.8"/><path d="M484.2 37l2 -0.2v4.2l-2 -0.2z"/>
</g>
<path d="M414.8 47.5A3.9 3.9 0 1 0 415.2 42.2" fill="none" stroke="#d4d4d4" stroke-width="1.6"/>
<path d="M413 44.5l4 1.5l-3.5 3z" fill="#d4d4d4"/>
<path d="M449 41v8M445 45h8" stroke="#d4d4d4" stroke-width="2"/>
<ellipse cx="484" cy="44.6" rx="7.5" ry="2.3" fill="none" stroke="#d4d4d4" stroke-width="1.3"/>
<path d="M482 44.5l4.5 2.3l-4.5 2.5z" fill="#d4d4d4"/>
<path d="M495.5 48v4h-4z" fill="#d4d4d4"/>
<!-- focus icon -->
<g fill="none" stroke="#d4d4d4" stroke-width="1.5">
<path d="M514.5 37.5v-3.8h3.8M525.7 33.7h3.8v3.8M529.5 44.5v3.8h-3.8M518.3 48.3h-3.8v-3.8"/>
</g>
<circle cx="522" cy="41" r="4.1" fill="#d4d4d4"/>
<!-- fov icon -->
<g fill="none" stroke="#d0d0d0" stroke-width="1.2">
<path d="M662.8 33.2V48.5L647.6 40.8Z"/>
<path d="M653.5 33.5Q659 40.8 653.5 48.3"/>
<path d="M652 40.8h3"/>
</g>
<!-- restart icon -->
<path d="M759.6 36.2A5.9 5.9 0 1 0 760 45.8" fill="none" stroke="#d8d8d8" stroke-width="2.2"/>
<path d="M756 39.5h6.3v-6.3z" fill="#d8d8d8"/>
<!-- eye button -->
<rect x="822.5" y="28.5" width="41" height="25" rx="2" fill="#0b77cc" stroke="#1a1a1a" stroke-width="1"/>
<path d="M835 40.8Q843 32 851 40.8Q843 49.6 835 40.8Z" fill="#d8d8d8"/>
<circle cx="843" cy="40.8" r="3.8" fill="#0b77cc"/>
<circle cx="844.3" cy="39.5" r="1.1" fill="#d8d8d8"/>
<path d="M857 31h4v4z" fill="#d8d8d8"/>
<!-- magnifier -->
<circle cx="885.8" cy="39.8" r="3.3" fill="none" stroke="#d0d0d0" stroke-width="1.5"/>
<path d="M888.3 42.3l3.8 3.6" stroke="#d0d0d0" stroke-width="2.6"/>

<!-- side strip icons -->
<path d="M331 65.8V82.2L334.8 78.6L337 82.4L339.2 81.4L337.2 77.2H342.6Z" fill="#cbcbcb"/>
<g fill="#cbcbcb">
<rect x="331" y="102" width="16" height="1.2"/><rect x="331" y="113" width="16" height="1.2"/>
<rect x="332" y="104.2" width="4" height="1.8"/><rect x="337" y="104.2" width="4" height="1.8"/><rect x="342" y="104.2" width="4" height="1.8"/>
<rect x="332" y="107.1" width="4" height="1.8"/><rect x="337" y="107.1" width="4" height="1.8"/><rect x="342" y="107.1" width="4" height="1.8"/>
<rect x="332" y="110" width="4" height="1.8"/><rect x="337" y="110" width="4" height="1.8"/><rect x="342" y="110" width="4" height="1.8"/>
</g>
<text x="330.5" y="146" font-family="Liberation Sans" font-weight="bold" font-size="16.5" fill="#cbcbcb">A</text>
<g stroke="#cbcbcb" stroke-width="1.2" fill="none"><path d="M344.6 137.5v10M336 147.6h8.6"/></g>
<circle cx="344.6" cy="147.6" r="2.4" fill="#cbcbcb"/>
<path d="M343 139l1.6-2l1.6 2z M337.5 146l-2 1.6l2 1.6z" fill="#cbcbcb"/>
<path d="M331 173.3L338.8 168.8L346.7 173.3L338.8 177.8Z" fill="#cbcbcb"/>
<path d="M331 176.8L338.8 181.1L346.7 176.8M331 179.8L338.8 184.2L346.7 179.8" fill="none" stroke="#cbcbcb" stroke-width="1.2"/>
<path d="M331 210h4.5" stroke="#cbcbcb" stroke-width="1.8"/>
<path d="M343 205.5Q336 204 335.5 210Q336 216 343 214.5" fill="none" stroke="#cbcbcb" stroke-width="1.8"/>
<path d="M342 202.8l5 2.7l-5 2.7z M342 211.8l5 2.7l-5 2.7z" fill="#cbcbcb"/>
<rect x="323.3" y="228" width="29.5" height="31.5" rx="2" fill="#1c1c1c"/>
<g fill="#1a86d8">
<circle cx="333.3" cy="239.3" r="2.6"/><circle cx="339.6" cy="239.3" r="2.6"/>
<rect x="331" y="243" width="12.2" height="8.2"/>
<path d="M343.8 247L347 243.5V251Z"/>
</g>
</svg>
</body></html>
